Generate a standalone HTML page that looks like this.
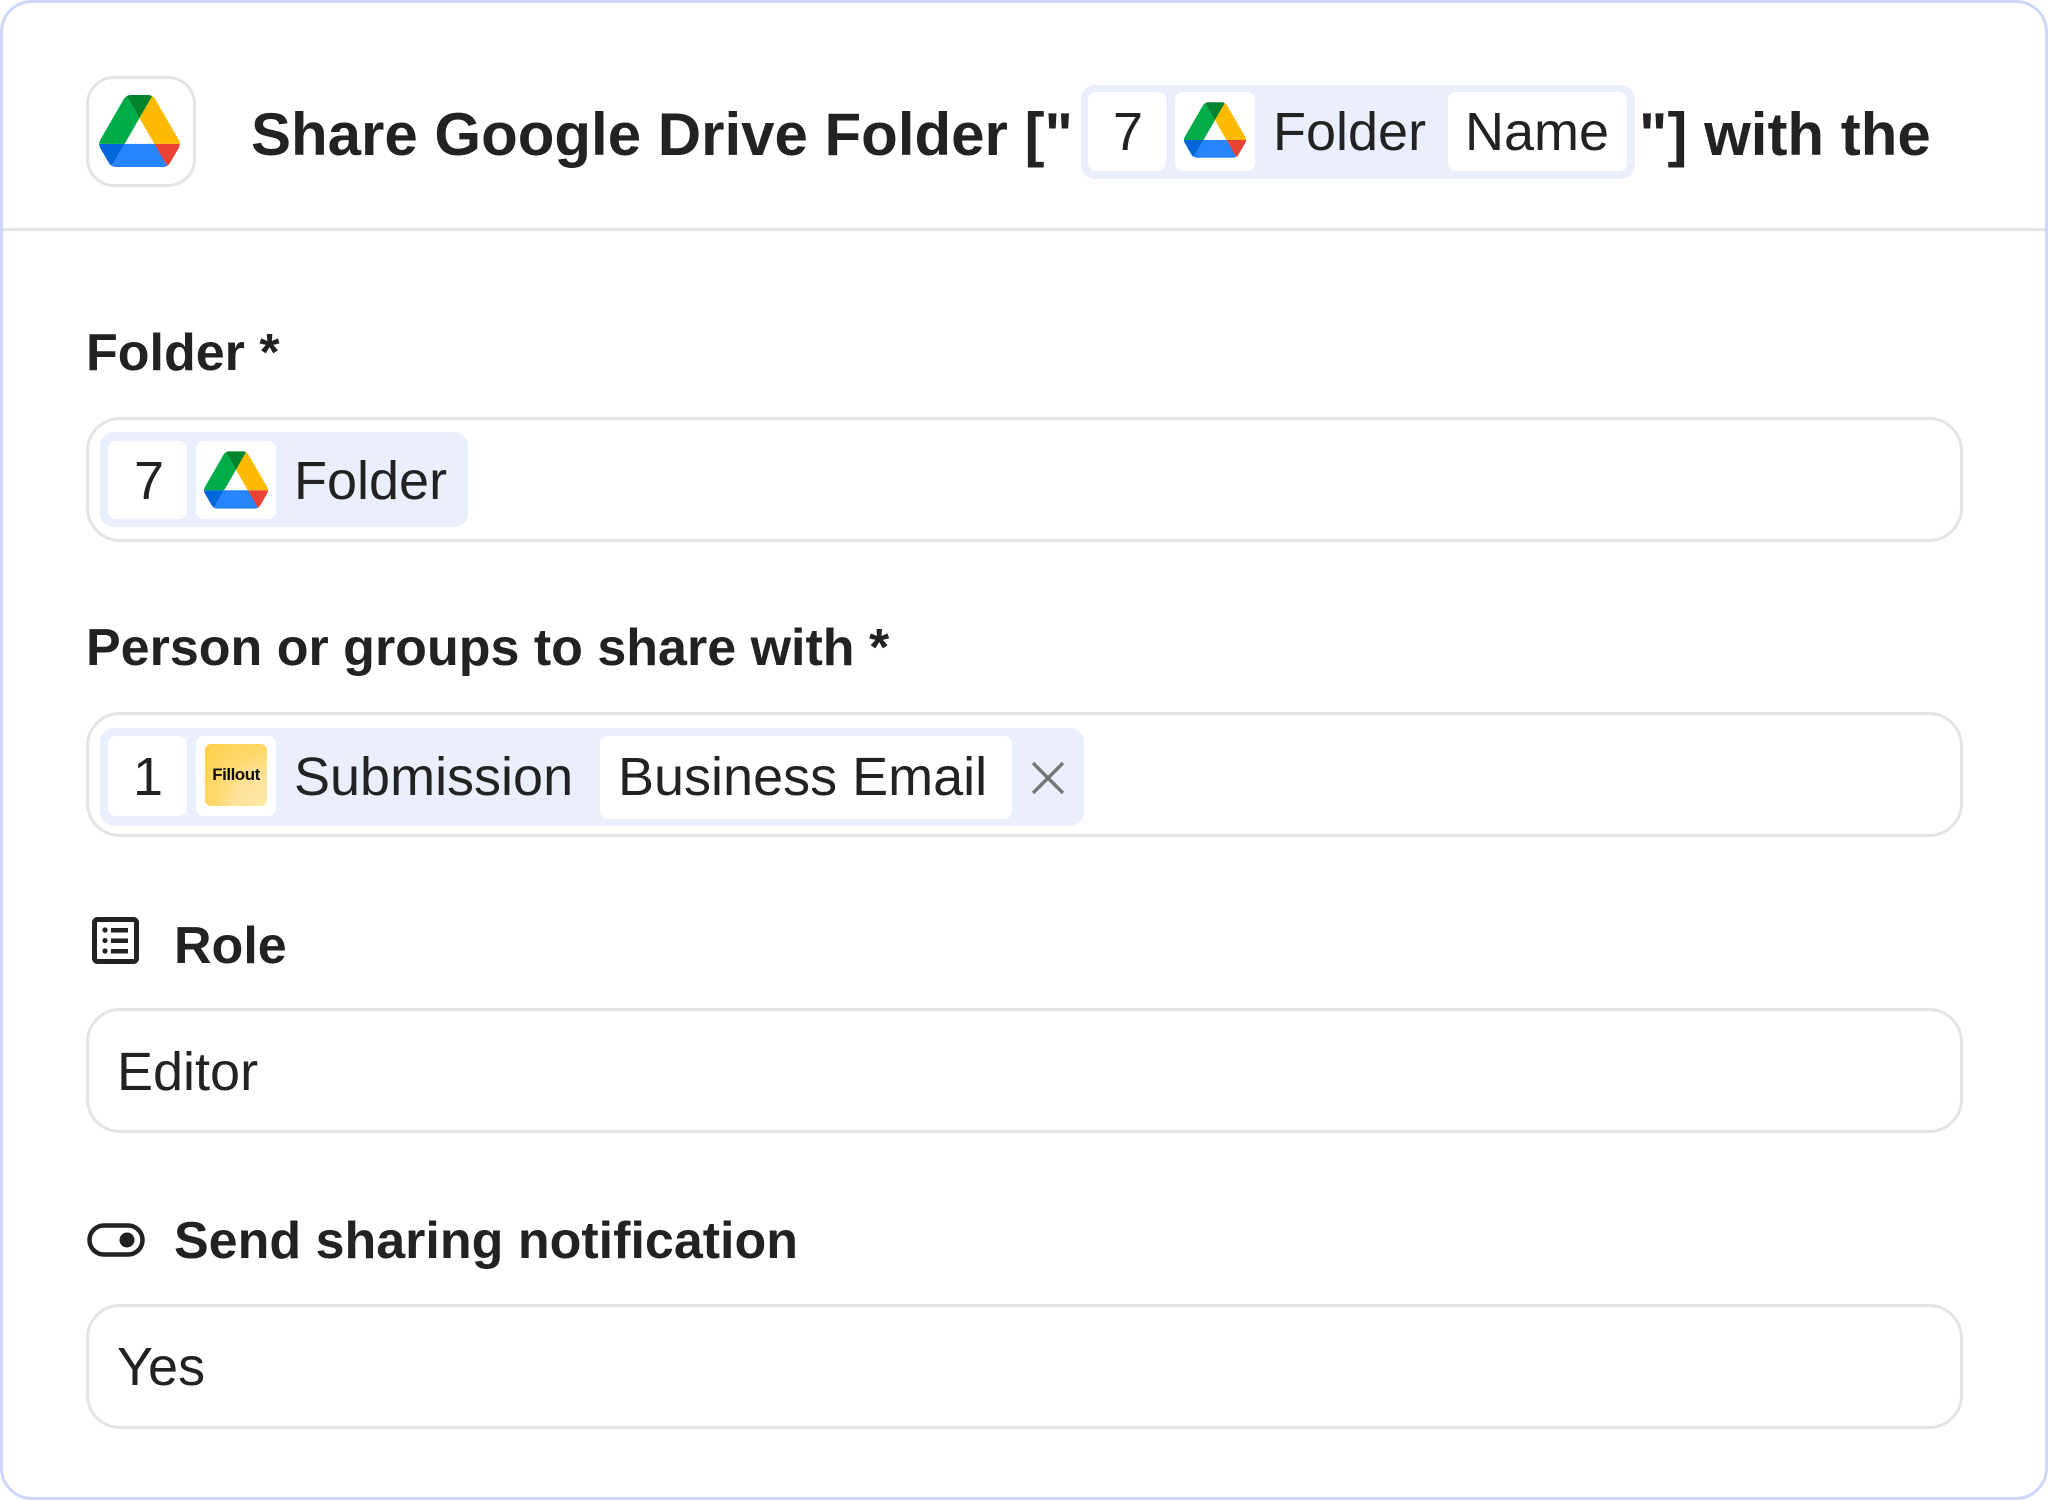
<!DOCTYPE html>
<html><head><meta charset="utf-8"><style>
*{margin:0;padding:0;box-sizing:border-box}
html,body{width:2048px;height:1500px;background:#fff;overflow:hidden}
body{font-family:"Liberation Sans",sans-serif;color:#222;position:relative}
.card{position:absolute;left:0;top:0;width:2048px;height:1500px;border:3px solid #cdd7fb;border-radius:32px}
.abs{position:absolute}
.hr{position:absolute;left:3px;right:3px;top:228px;height:3px;background:#e4e4e4}
.iconbox{left:86px;top:76px;width:110px;height:111px;border:3px solid #e4e4e4;border-radius:28px}
.title{font-weight:bold;font-size:60px;white-space:nowrap;line-height:1}
.chip{background:#eaeefd;border-radius:14px}
.wb{background:#fff;border-radius:8px}
.reg{font-size:54px;line-height:1;white-space:nowrap}
.lab{font-weight:bold;font-size:52px;line-height:1;white-space:nowrap}
.inp{left:86px;width:1877px;height:125px;border:3px solid #e4e4e4;border-radius:34px}
</style></head><body>
<div class="card"></div>
<div class="hr"></div>

<svg width="0" height="0" style="position:absolute"><defs><symbol id="gd" viewBox="0 0 87.3 78">
<path d="m6.6 66.85 3.85 6.65c.8 1.4 1.95 2.5 3.3 3.3l13.75-23.8h-27.5c0 1.55.4 3.1 1.2 4.5z" fill="#0066da"/>
<path d="m43.65 25-13.75-23.8c-1.35.8-2.5 1.9-3.3 3.3l-25.4 44a9.06 9.06 0 0 0 -1.2 4.5h27.5z" fill="#00ac47"/>
<path d="m73.55 76.8c1.35-.8 2.5-1.9 3.3-3.3l1.6-2.75 7.65-13.25c.8-1.4 1.2-2.95 1.2-4.5h-27.502l5.852 11.5z" fill="#ea4335"/>
<path d="m43.65 25 13.75-23.8c-1.35-.8-2.9-1.2-4.5-1.2h-18.5c-1.6 0-3.150.45-4.5 1.2z" fill="#00832d"/>
<path d="m59.8 53h-32.3l-13.750 23.8c1.35.8 2.9 1.2 4.5 1.2h50.8c1.6 0 3.15-.45 4.5-1.2z" fill="#2684fc"/>
<path d="m73.4 26.5-12.7-22c-.8-1.4-1.95-2.5-3.3-3.300l-13.75 23.8 16.15 28h27.450c0-1.55-.4-3.1-1.2-4.5z" fill="#ffba00"/>
</symbol></defs></svg>

<!-- header -->
<div class="abs iconbox"></div>
<svg class="abs" style="left:99px;top:95px" width="81" height="72"><use href="#gd"/></svg>
<div class="abs title" style="left:251px;top:105px">Share Google Drive Folder ["</div>
<div class="abs chip" style="left:1081px;top:85px;width:554px;height:94px"></div>
<div class="abs wb" style="left:1088px;top:92px;width:78px;height:79px"></div>
<div class="abs reg" style="left:1113px;top:105px">7</div>
<div class="abs wb" style="left:1175px;top:92px;width:80px;height:79px"></div>
<svg class="abs" style="left:1184px;top:102px" width="62" height="56"><use href="#gd"/></svg>
<div class="abs reg" style="left:1273px;top:105px">Folder</div>
<div class="abs wb" style="left:1448px;top:92px;width:179px;height:79px"></div>
<div class="abs reg" style="left:1465px;top:105px">Name</div>
<div class="abs title" style="left:1639px;top:105px">"] with the</div>

<!-- Folder -->
<div class="abs lab" style="left:86px;top:327px">Folder *</div>
<div class="abs inp" style="top:417px"></div>
<div class="abs chip" style="left:100px;top:432px;width:368px;height:95px"></div>
<div class="abs wb" style="left:108px;top:441px;width:79px;height:78px"></div>
<div class="abs reg" style="left:134px;top:454px">7</div>
<div class="abs wb" style="left:196px;top:441px;width:80px;height:78px"></div>
<svg class="abs" style="left:204px;top:451px" width="64" height="58"><use href="#gd"/></svg>
<div class="abs reg" style="left:294px;top:454px">Folder</div>

<!-- Person -->
<div class="abs lab" style="left:86px;top:622px">Person or groups to share with *</div>
<div class="abs inp" style="top:712px"></div>
<div class="abs chip" style="left:100px;top:728px;width:984px;height:98px"></div>
<div class="abs wb" style="left:108px;top:736px;width:79px;height:80px"></div>
<div class="abs reg" style="left:133px;top:750px">1</div>
<div class="abs wb" style="left:196px;top:736px;width:80px;height:80px"></div>
<div class="abs" style="left:205px;top:744px;width:62px;height:62px;border-radius:6px;background:radial-gradient(circle at 100% 100%,#ffe9a8 0,#ffe29a 35%,#ffd96e 60%,#ffcf45 100%);font-weight:bold;font-size:17px;letter-spacing:-0.5px;line-height:62px;text-align:center;color:#111">Fillout</div>
<div class="abs reg" style="left:294px;top:750px">Submission</div>
<div class="abs wb" style="left:600px;top:736px;width:412px;height:83px"></div>
<div class="abs reg" style="left:618px;top:750px">Business Email</div>
<svg class="abs" style="left:1030px;top:760px" width="36" height="36"><path d="M3 3L33 33M33 3L3 33" stroke="#777" stroke-width="3.5"/></svg>

<!-- Role -->
<svg class="abs" style="left:92px;top:917px" width="47" height="47" viewBox="0 0 47 47">
<rect x="2.5" y="2.5" width="42" height="42" rx="3" fill="none" stroke="#222" stroke-width="5"/>
<circle cx="13" cy="13" r="2.6" fill="#222"/><circle cx="13" cy="23.5" r="2.6" fill="#222"/><circle cx="13" cy="34" r="2.6" fill="#222"/>
<rect x="19" y="11" width="17" height="4.5" fill="#222"/><rect x="19" y="21.5" width="17" height="4.5" fill="#222"/><rect x="19" y="32" width="17" height="4.5" fill="#222"/>
</svg>
<div class="abs lab" style="left:174px;top:920px">Role</div>
<div class="abs inp" style="top:1008px"></div>
<div class="abs reg" style="left:117px;top:1045px">Editor</div>

<!-- Send -->
<svg class="abs" style="left:87px;top:1223px" width="58" height="34" viewBox="0 0 58 34">
<rect x="2.5" y="2.5" width="53" height="29" rx="14.5" fill="none" stroke="#222" stroke-width="4.5"/>
<circle cx="40" cy="17" r="7.5" fill="#222"/>
</svg>
<div class="abs lab" style="left:174px;top:1215px">Send sharing notification</div>
<div class="abs inp" style="top:1304px"></div>
<div class="abs reg" style="left:117px;top:1340px">Yes</div>
</body></html>
